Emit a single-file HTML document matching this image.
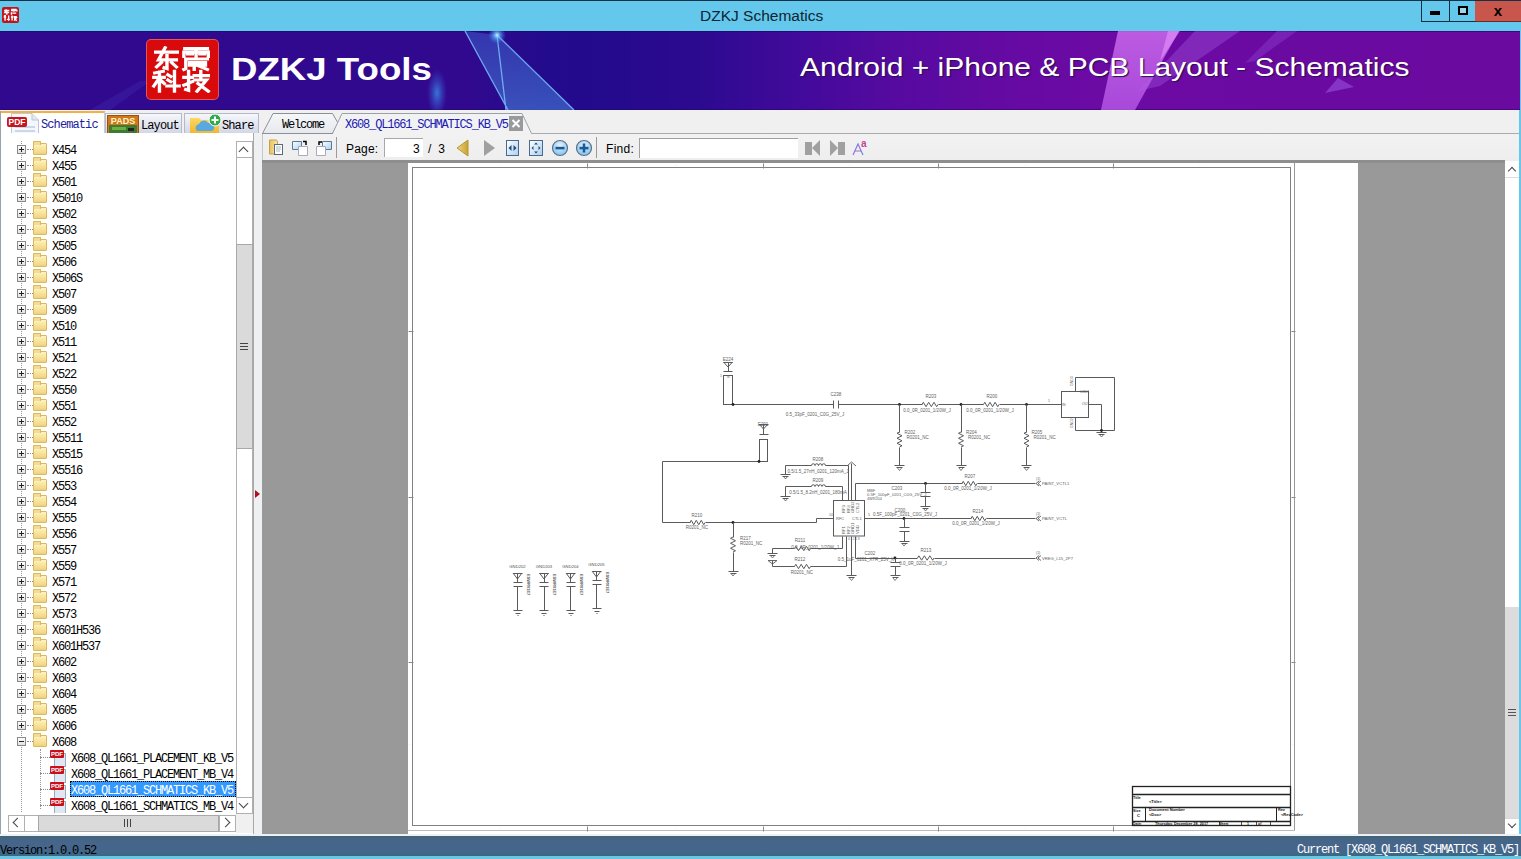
<!DOCTYPE html>
<html><head><meta charset="utf-8"><title>DZKJ Schematics</title>
<style>
*{margin:0;padding:0;box-sizing:border-box}
html,body{width:1521px;height:859px;overflow:hidden;background:#f0f0f0;font-family:"Liberation Sans",sans-serif;position:relative}
.a{position:absolute}
.mono{font-family:"Liberation Mono",monospace}
#title{left:0;top:0;width:1521px;height:31px;background:#64c8ec;border-top:1px solid #12324a}
#ttext{left:700px;top:7px;font-size:15.5px;color:#0e2434;white-space:nowrap}
#banner{left:0;top:31px;width:1520px;height:79px;overflow:hidden;
 background:linear-gradient(90deg,#2c0c8e 0%,#2a0b8e 30%,#2b0a90 45%,#3f0a98 60%,#5a0aa0 72%,#6a0aa2 80%,#6a0aa0 100%)}
#frameR{left:1519px;top:31px;width:2px;height:828px;background:#64c8ec}
#frameB{left:0;top:856px;width:1521px;height:3px;background:#6cc6e2}
.row{position:absolute;left:0;height:16px;width:236px}
.tx{position:absolute;top:4px;font-family:"Liberation Mono",monospace;font-size:12px;line-height:13px;color:#000;letter-spacing:-1.2px;white-space:nowrap}
.tx.sel{background:#3399ff;color:#fff;outline:1px dotted #000;outline-offset:-1px;top:0;padding:4px 0 0 1px;height:16px;width:166px;left:70px!important}
.pl,.mn{position:absolute;left:17px;top:4px;width:9px;height:9px;border:1px solid #8a8a8a;background:linear-gradient(#fff,#e0e0e0)}
.pl:before,.mn:before{content:"";position:absolute;left:1px;top:3px;width:5px;height:1px;background:#222}
.pl:after{content:"";position:absolute;left:3px;top:1px;width:1px;height:5px;background:#222}
.dh{position:absolute;left:27px;top:8px;width:6px;border-top:1px dotted #888}
.fd{position:absolute;left:33px;top:2px;width:14px;height:12px;background:linear-gradient(#fff4c0,#f2d27a);border:1px solid #d8b860;border-radius:1px}
.fd:before{content:"";position:absolute;left:-1px;top:-3px;width:6px;height:3px;background:#f4dc90;border:1px solid #d8b860;border-bottom:none;border-radius:1px 1px 0 0}
.dh2{position:absolute;left:40px;top:8px;width:12px;border-top:1px dotted #888}
.pdf{position:absolute;left:50px;top:1px;width:14px;height:14px}
.pdf:before{content:"";position:absolute;left:4px;top:3px;width:10px;height:12px;background:#dfe8f2;border:1px solid #9ab}
.pdf:after{content:"PDF";position:absolute;left:0;top:0;width:14px;height:8px;background:#c8101a;color:#fff;font-size:6px;line-height:8px;font-weight:bold;text-align:center;border-radius:1px}
</style></head><body>

<div id="title" class="a"></div>
<div class="a" style="left:2px;top:7px;width:17px;height:16px;background:#c0141c;border-radius:2px"></div>
<svg class="a" style="left:3px;top:8px" width="15" height="14" viewBox="0 0 66 54"><g fill="none" stroke="#fff" stroke-width="6"><path d="M5 7 H28 M15 2 L8 16 H27 M17 11 V26 M36 3 H60 M35 7 H61 V12 M48 4 V13 M37 15 V26 M41 19 H58 M4 31 L13 29 M3 36 H14 M9 30 V52 M17 46 H30 M25 29 V52 M35 36 H44 M40 29 V51 M46 34 H61 M47 39 H59 L49 52 M50 43 L61 52"/></g></svg>
<div id="ttext" class="a">DZKJ Schematics</div>
<div class="a" style="left:1421px;top:1px;width:28px;height:21px;border-left:1px solid #0e2d3e;border-bottom:1px solid #0e2d3e"></div>
<div class="a" style="left:1430px;top:11px;width:10px;height:4px;background:#000"></div>
<div class="a" style="left:1449px;top:1px;width:26px;height:21px;border-left:1px solid #0e2d3e;border-bottom:1px solid #0e2d3e"></div>
<div class="a" style="left:1458px;top:6px;width:10px;height:9px;border:2px solid #000;background:#9fd6e8"></div>
<div class="a" style="left:1475px;top:1px;width:46px;height:21px;background:#c8564c;border-bottom:1px solid #6a2a20"></div>
<div class="a" style="left:1490px;top:2px;width:16px;font-size:15px;font-weight:bold;color:#000;text-align:center;line-height:18px">x</div>
<div id="banner" class="a"></div>
<div id="frameR" class="a"></div>

<div class="a" style="left:0;top:31px;width:1520px;height:79px;overflow:hidden">
<svg width="1520" height="79" style="position:absolute;left:0;top:0">
 <defs>
  <linearGradient id="bg" x1="0" y1="0" x2="1520" y2="0" gradientUnits="userSpaceOnUse">
   <stop offset="0" stop-color="#31098e"/><stop offset="0.305" stop-color="#31098e"/>
   <stop offset="0.36" stop-color="#220b8c"/><stop offset="0.395" stop-color="#240a8c"/>
   <stop offset="0.46" stop-color="#2c0a90"/><stop offset="0.526" stop-color="#420a9a"/>
   <stop offset="0.59" stop-color="#560aa0"/><stop offset="0.658" stop-color="#640aa2"/>
   <stop offset="0.724" stop-color="#6c0aa4"/><stop offset="1" stop-color="#6a0a9e"/>
  </linearGradient>
  <linearGradient id="tri" x1="0" y1="0" x2="0" y2="1"><stop offset="0" stop-color="#3a58c8"/><stop offset="1" stop-color="#4a8ae0"/></linearGradient>
  <radialGradient id="glow"><stop offset="0" stop-color="#c0f8ff" stop-opacity="1"/><stop offset="0.4" stop-color="#60c0ff" stop-opacity="0.6"/><stop offset="1" stop-color="#4080ff" stop-opacity="0"/></radialGradient>
  <radialGradient id="glow2"><stop offset="0" stop-color="#3a9af0" stop-opacity="0.75"/><stop offset="1" stop-color="#3a60e0" stop-opacity="0"/></radialGradient>
  <linearGradient id="gp" x1="0" y1="0" x2="0" y2="1"><stop offset="0" stop-color="#d070f0"/><stop offset="1" stop-color="#b858e8"/></linearGradient>
 </defs>
 <rect x="0" y="0" width="1520" height="79" fill="url(#bg)"/>
 <rect x="0" y="0" width="1520" height="1" fill="#1c0860" opacity="0.6"/>
 <rect x="0" y="78" width="1520" height="1" fill="#1c0860" opacity="0.5"/>
 <polygon points="90,79 140,50 150,50 110,79" fill="#4a3ac0" opacity="0.25"/>
 <polygon points="465,0 497,4 574,79 508,79" fill="url(#tri)" opacity="0.55"/>
 <path d="M465,0 L508,79 M497,4 L506,79 M497,4 L574,79" stroke="#78c0ff" stroke-width="1.3" fill="none" opacity="0.85"/>
 <circle cx="497" cy="4" r="9" fill="url(#glow)"/>
 <ellipse cx="437" cy="62" rx="10" ry="24" fill="url(#glow2)"/>
 <polygon points="1101,79 1118,0 1179,0 1135,79" fill="url(#gp)" opacity="0.8"/>
 <polygon points="1168,0 1180,0 1160,30" fill="#f0a0ff" opacity="0.5"/>
 <polygon points="1195,0 1240,0 1160,55 1138,60" fill="#a860e8" opacity="0.35"/>
 <polygon points="1277,0 1297,0 1255,30 1245,32" fill="#9a58e0" opacity="0.3"/>
 <polygon points="1325,62 1354,56 1338,47" fill="#9a58e8" opacity="0.55"/>
</svg>
<div class="a" style="left:147px;top:9px;width:71px;height:59px;background:#d80a0c;border-radius:4px;box-shadow:0 0 0 1px #e05858"></div>
<svg class="a" style="left:151px;top:15px" width="62" height="47" viewBox="0 0 66 54" preserveAspectRatio="none">
 <g fill="none" stroke="#fff" stroke-width="3.6" stroke-linecap="square">
  <!-- c1 -->
  <path d="M5 7 H28 M15 2 L8 16 H27 M17 11 V26 L14 25 M11 19 L6 24 M22 19 L27 24"/>
  <!-- c2 -->
  <path d="M36 3 H60 M35 7 V12 M35 7 H61 V12 M48 4 V13 M39 9 H44 M52 9 H57 M37 15 H60 M37 15 V26 L35 27 M41 19 H58 M41 22 H58 M46 22 V27 M49 22 L60 27"/>
  <!-- c3 -->
  <path d="M4 31 L13 29 M3 36 H14 M9 30 V52 M8 38 L3 46 M10 39 L14 43 M18 33 L21 35 M18 39 L21 41 M17 46 H30 M25 29 V52"/>
  <!-- c4 -->
  <path d="M35 36 H44 M40 29 V51 L37 50 M35 45 L44 41 M46 34 H61 M53 29 V39 M47 39 H59 L49 52 M50 43 L61 52"/>
 </g>
</svg>
<div class="a" style="left:231px;top:20px;font-size:32px;font-weight:bold;color:#fff;white-space:nowrap;transform:scaleX(1.145);transform-origin:0 0">DZKJ Tools</div>
<div class="a" style="left:800px;top:22px;font-size:25px;color:#fff;white-space:nowrap;text-shadow:1px 1px 1px #2a1050;transform:scaleX(1.2);transform-origin:0 0">Android + iPhone &amp; PCB Layout - Schematics</div>
</div>


<!-- left tabs -->
<div class="a" style="left:0;top:110px;width:262px;height:23px;background:#f0f0f0"></div>
<div class="a" style="left:0;top:111px;width:105px;height:23px;background:#fff;border-top:2px solid #f4b040;border-right:1px solid #c8ccd8"></div>
<svg class="a" style="left:6px;top:112px" width="34" height="22">
 <path d="M5.5 1.5 H26 L32.5 8 V21.5 H5.5 Z" fill="#f4f8fc" stroke="#b8c8d8"/>
 <path d="M26 1.5 V8 H32.5" fill="#e0e8f0" stroke="#b8c8d8"/>
 <rect x="9" y="14" width="20" height="2" fill="#c8d8ea"/><rect x="9" y="18" width="20" height="2" fill="#c8d8ea"/>
 <rect x="1" y="5" width="20" height="10" rx="2" fill="#c8141c"/>
 <text x="11" y="13.3" font-size="8.5" font-weight="bold" fill="#fff" text-anchor="middle" font-family="Liberation Sans">PDF</text>
</svg>
<div class="a mono" style="left:41px;top:118px;font-size:12px;letter-spacing:-0.9px;color:#2020a0">Schematic</div>
<div class="a" style="left:105px;top:113px;width:77px;height:20px;background:linear-gradient(#f6f7fb,#d3d7e6);border:1px solid #b4b8c8;border-bottom:none"></div>
<svg class="a" style="left:107px;top:115px" width="32" height="18">
 <rect x="0.5" y="0.5" width="31" height="18" fill="#d07818" stroke="#9a5010"/>
 <text x="16" y="9" font-size="9" font-weight="bold" fill="#fff4c8" text-anchor="middle" font-family="Liberation Sans">PADS</text>
 <rect x="2" y="10" width="28" height="8" fill="#3d7a34"/>
 <rect x="5" y="12" width="14" height="3" fill="#6ab040"/><rect x="21" y="13" width="6" height="3" fill="#222"/>
</svg>
<div class="a mono" style="left:141px;top:119px;font-size:12px;letter-spacing:-0.9px;color:#000">Layout</div>
<div class="a" style="left:184px;top:113px;width:75px;height:20px;background:linear-gradient(#f6f7fb,#d3d7e6);border:1px solid #b4b8c8;border-bottom:none"></div>
<svg class="a" style="left:189px;top:113px" width="34" height="20">
 <defs><linearGradient id="fold" x1="0" y1="0" x2="0" y2="1"><stop offset="0" stop-color="#fbd860"/><stop offset="1" stop-color="#f0b830"/></linearGradient></defs>
 <path d="M1 5 H10 L12 7 H30 V20 H1 Z" fill="url(#fold)"/>
 <path d="M8 18 a4 4 0 0 1 2-7 a5 5 0 0 1 9-1 a4 4 0 0 1 4 8 Z" fill="#5aa8e0"/>
 <circle cx="26" cy="7" r="6" fill="#2eaa48" stroke="#fff" stroke-width="1"/>
 <path d="M26 3.5 V10.5 M22.5 7 H29.5" stroke="#fff" stroke-width="2"/>
</svg>
<div class="a mono" style="left:222px;top:119px;font-size:12px;letter-spacing:-0.9px;color:#000">Share</div>
<!-- panel body -->
<div class="a" style="left:0;top:133px;width:262px;height:703px;background:#fff;border-left:1px solid #c8ccd4"></div>
<div class="a" style="left:253px;top:133px;width:9px;height:703px;background:#eef0f2;border-left:1px solid #a8a8a8"></div>
<div class="a" style="left:0;top:0;width:236px;height:813px;overflow:hidden;clip-path:inset(141px 0 0 0)">
<div class="a" style="left:21px;top:141px;height:675px;border-left:1px dotted #999"></div>
<div class="a" style="left:40px;top:749px;height:60px;border-left:1px dotted #999"></div>
<div class="row" style="top:141px"><i class="pl"></i><span class="dh"></span><span class="fd"></span><span class="tx" style="left:52px">X454</span></div>
<div class="row" style="top:157px"><i class="pl"></i><span class="dh"></span><span class="fd"></span><span class="tx" style="left:52px">X455</span></div>
<div class="row" style="top:173px"><i class="pl"></i><span class="dh"></span><span class="fd"></span><span class="tx" style="left:52px">X501</span></div>
<div class="row" style="top:189px"><i class="pl"></i><span class="dh"></span><span class="fd"></span><span class="tx" style="left:52px">X5010</span></div>
<div class="row" style="top:205px"><i class="pl"></i><span class="dh"></span><span class="fd"></span><span class="tx" style="left:52px">X502</span></div>
<div class="row" style="top:221px"><i class="pl"></i><span class="dh"></span><span class="fd"></span><span class="tx" style="left:52px">X503</span></div>
<div class="row" style="top:237px"><i class="pl"></i><span class="dh"></span><span class="fd"></span><span class="tx" style="left:52px">X505</span></div>
<div class="row" style="top:253px"><i class="pl"></i><span class="dh"></span><span class="fd"></span><span class="tx" style="left:52px">X506</span></div>
<div class="row" style="top:269px"><i class="pl"></i><span class="dh"></span><span class="fd"></span><span class="tx" style="left:52px">X506S</span></div>
<div class="row" style="top:285px"><i class="pl"></i><span class="dh"></span><span class="fd"></span><span class="tx" style="left:52px">X507</span></div>
<div class="row" style="top:301px"><i class="pl"></i><span class="dh"></span><span class="fd"></span><span class="tx" style="left:52px">X509</span></div>
<div class="row" style="top:317px"><i class="pl"></i><span class="dh"></span><span class="fd"></span><span class="tx" style="left:52px">X510</span></div>
<div class="row" style="top:333px"><i class="pl"></i><span class="dh"></span><span class="fd"></span><span class="tx" style="left:52px">X511</span></div>
<div class="row" style="top:349px"><i class="pl"></i><span class="dh"></span><span class="fd"></span><span class="tx" style="left:52px">X521</span></div>
<div class="row" style="top:365px"><i class="pl"></i><span class="dh"></span><span class="fd"></span><span class="tx" style="left:52px">X522</span></div>
<div class="row" style="top:381px"><i class="pl"></i><span class="dh"></span><span class="fd"></span><span class="tx" style="left:52px">X550</span></div>
<div class="row" style="top:397px"><i class="pl"></i><span class="dh"></span><span class="fd"></span><span class="tx" style="left:52px">X551</span></div>
<div class="row" style="top:413px"><i class="pl"></i><span class="dh"></span><span class="fd"></span><span class="tx" style="left:52px">X552</span></div>
<div class="row" style="top:429px"><i class="pl"></i><span class="dh"></span><span class="fd"></span><span class="tx" style="left:52px">X5511</span></div>
<div class="row" style="top:445px"><i class="pl"></i><span class="dh"></span><span class="fd"></span><span class="tx" style="left:52px">X5515</span></div>
<div class="row" style="top:461px"><i class="pl"></i><span class="dh"></span><span class="fd"></span><span class="tx" style="left:52px">X5516</span></div>
<div class="row" style="top:477px"><i class="pl"></i><span class="dh"></span><span class="fd"></span><span class="tx" style="left:52px">X553</span></div>
<div class="row" style="top:493px"><i class="pl"></i><span class="dh"></span><span class="fd"></span><span class="tx" style="left:52px">X554</span></div>
<div class="row" style="top:509px"><i class="pl"></i><span class="dh"></span><span class="fd"></span><span class="tx" style="left:52px">X555</span></div>
<div class="row" style="top:525px"><i class="pl"></i><span class="dh"></span><span class="fd"></span><span class="tx" style="left:52px">X556</span></div>
<div class="row" style="top:541px"><i class="pl"></i><span class="dh"></span><span class="fd"></span><span class="tx" style="left:52px">X557</span></div>
<div class="row" style="top:557px"><i class="pl"></i><span class="dh"></span><span class="fd"></span><span class="tx" style="left:52px">X559</span></div>
<div class="row" style="top:573px"><i class="pl"></i><span class="dh"></span><span class="fd"></span><span class="tx" style="left:52px">X571</span></div>
<div class="row" style="top:589px"><i class="pl"></i><span class="dh"></span><span class="fd"></span><span class="tx" style="left:52px">X572</span></div>
<div class="row" style="top:605px"><i class="pl"></i><span class="dh"></span><span class="fd"></span><span class="tx" style="left:52px">X573</span></div>
<div class="row" style="top:621px"><i class="pl"></i><span class="dh"></span><span class="fd"></span><span class="tx" style="left:52px">X601H536</span></div>
<div class="row" style="top:637px"><i class="pl"></i><span class="dh"></span><span class="fd"></span><span class="tx" style="left:52px">X601H537</span></div>
<div class="row" style="top:653px"><i class="pl"></i><span class="dh"></span><span class="fd"></span><span class="tx" style="left:52px">X602</span></div>
<div class="row" style="top:669px"><i class="pl"></i><span class="dh"></span><span class="fd"></span><span class="tx" style="left:52px">X603</span></div>
<div class="row" style="top:685px"><i class="pl"></i><span class="dh"></span><span class="fd"></span><span class="tx" style="left:52px">X604</span></div>
<div class="row" style="top:701px"><i class="pl"></i><span class="dh"></span><span class="fd"></span><span class="tx" style="left:52px">X605</span></div>
<div class="row" style="top:717px"><i class="pl"></i><span class="dh"></span><span class="fd"></span><span class="tx" style="left:52px">X606</span></div>
<div class="row" style="top:733px"><i class="mn"></i><span class="dh"></span><span class="fd"></span><span class="tx" style="left:52px">X608</span></div>
<div class="row" style="top:749px"><span class="dh2"></span><span class="pdf"></span><span class="tx" style="left:71px">X608_QL1661_PLACEMENT_KB_V5</span></div>
<div class="row" style="top:765px"><span class="dh2"></span><span class="pdf"></span><span class="tx" style="left:71px">X608_QL1661_PLACEMENT_MB_V4</span></div>
<div class="row" style="top:781px"><span class="dh2"></span><span class="pdf"></span><span class="tx sel" style="left:71px">X608_QL1661_SCHMATICS_KB_V5</span></div>
<div class="row" style="top:797px"><span class="dh2"></span><span class="pdf"></span><span class="tx" style="left:71px">X608_QL1661_SCHMATICS_MB_V4</span></div>
</div>
<!-- vscroll -->
<div class="a" style="left:236px;top:141px;width:17px;height:673px;background:#fff;border-left:1px solid #b0b0b0;border-right:1px solid #b0b0b0"></div>
<div class="a" style="left:236px;top:141px;width:17px;height:17px;background:#fff;border:1px solid #b0b0b0"></div>
<div class="a" style="left:240px;top:148px;width:7px;height:7px;border-left:1px solid #444;border-top:1px solid #444;transform:rotate(45deg)"></div>
<div class="a" style="left:236px;top:244px;width:17px;height:205px;background:#dadada;border:1px solid #a8a8a8"></div>
<div class="a" style="left:240px;top:343px;width:8px;height:7px;border-top:1px solid #444;border-bottom:1px solid #444"></div>
<div class="a" style="left:240px;top:346px;width:8px;height:1px;background:#444"></div>
<div class="a" style="left:236px;top:797px;width:17px;height:17px;background:#fff;border:1px solid #b0b0b0"></div>
<div class="a" style="left:240px;top:800px;width:7px;height:7px;border-right:1px solid #444;border-bottom:1px solid #444;transform:rotate(45deg)"></div>
<!-- hscroll -->
<div class="a" style="left:8px;top:815px;width:228px;height:17px;background:#fff;border:1px solid #b0b0b0"></div>
<div class="a" style="left:8px;top:815px;width:17px;height:17px;border:1px solid #b0b0b0"></div>
<div class="a" style="left:14px;top:819px;width:7px;height:7px;border-left:1px solid #444;border-bottom:1px solid #444;transform:rotate(45deg)"></div>
<div class="a" style="left:38px;top:815px;width:181px;height:17px;background:#dadada;border:1px solid #a8a8a8"></div>
<div class="a" style="left:124px;top:819px;width:7px;height:8px;border-left:1px solid #444;border-right:1px solid #444"></div>
<div class="a" style="left:127px;top:819px;width:1px;height:8px;background:#444"></div>
<div class="a" style="left:219px;top:815px;width:17px;height:17px;border:1px solid #b0b0b0"></div>
<div class="a" style="left:222px;top:819px;width:7px;height:7px;border-right:1px solid #444;border-top:1px solid #444;transform:rotate(45deg)"></div>
<div class="a" style="left:236px;top:814px;width:17px;height:19px;background:#f0f0f0"></div>

<div class="a" style="left:0;top:111px;width:1px;height:725px;background:#98a2aa"></div>
<svg class="a" style="left:253px;top:489px" width="8" height="10"><path d="M2 1 L7 5 L2 9 Z" fill="#b01020"/></svg>

<!-- doc tabs -->
<svg class="a" style="left:262px;top:110px" width="280" height="24">
 <defs><linearGradient id="wt" x1="0" y1="0" x2="0" y2="1"><stop offset="0" stop-color="#f6f7f9"/><stop offset="1" stop-color="#e6e8ec"/></linearGradient></defs>
 <polygon points="0.5,23.5 11,3.5 70.5,3.5 76,13 70.5,23.5" fill="url(#wt)" stroke="#8a9098" stroke-width="1"/>
 <polygon points="70.5,23.5 80,3.5 260,3.5 269.5,23.5" fill="#f2f2f2" stroke="#9aa0a8" stroke-width="1"/>
 <rect x="71" y="23" width="198" height="2" fill="#f2f2f2"/>
</svg>
<div class="a mono" style="left:282px;top:118px;font-size:12px;letter-spacing:-1.2px;color:#000">Welcome</div>
<div class="a mono" style="left:345px;top:118px;font-size:12px;letter-spacing:-1.17px;color:#1a1ab4">X608_QL1661_SCHMATICS_KB_V5</div>
<div class="a" style="left:509px;top:116px;width:14px;height:15px;background:#9a9a9a"></div>
<svg class="a" style="left:509px;top:116px" width="14" height="15"><path d="M3.5 4 L10.5 11 M10.5 4 L3.5 11" stroke="#fff" stroke-width="2"/></svg>
<!-- toolbar -->
<div class="a" style="left:262px;top:133px;width:1257px;height:28px;background:linear-gradient(#f2f2f2,#eeeeee);border-left:1px solid #c8c8c8"></div>
<div class="a" style="left:262px;top:160px;width:1243px;height:3px;background:#8e8e8e"></div>
<div class="a" style="left:262px;top:133px;width:71px;height:1px;background:#8a9098"></div>
<div class="a" style="left:531px;top:133px;width:988px;height:1px;background:#a8acb0"></div>
<svg class="a" style="left:262px;top:134px" width="620" height="26">
 <defs>
  <linearGradient id="fo" x1="0" y1="0" x2="1" y2="0"><stop offset="0" stop-color="#e8c060"/><stop offset="1" stop-color="#f8e8b0"/></linearGradient>
  <linearGradient id="bd" x1="0" y1="0" x2="1" y2="1"><stop offset="0" stop-color="#ffffff"/><stop offset="1" stop-color="#a8d0f0"/></linearGradient>
  <linearGradient id="gold" x1="0" y1="0" x2="1" y2="0"><stop offset="0" stop-color="#f0d878"/><stop offset="1" stop-color="#c8a038"/></linearGradient>
  <radialGradient id="zb" cx="0.5" cy="0.35" r="0.6"><stop offset="0" stop-color="#e8f6ff"/><stop offset="1" stop-color="#88c4ec"/></radialGradient>
 </defs>
 <!-- open -->
 <path d="M7.5 6 H14.5 L15.5 8 V20 H7.5 Z" fill="url(#fo)" stroke="#c8a048"/>
 <rect x="12.5" y="10.5" width="8" height="10" fill="#fff" stroke="#5a6a7a"/>
 <path d="M14 13 H19 M14 15 H19 M14 17 H18" stroke="#8aa" stroke-width="0.8"/>
 <!-- rot1 -->
 <path d="M30.5 7.5 H39.5 V15.5 H30.5 Z" fill="url(#bd)" stroke="#5a7898"/>
 <path d="M36.5 12.5 H45.5 V21.5 H36.5 Z" fill="#fff" stroke="#aab"/>
 <path d="M41 7.5 H44 V11" fill="none" stroke="#000" stroke-width="1.5"/>
 <!-- rot2 -->
 <path d="M60.5 7.5 H69.5 V15.5 H60.5 Z" fill="url(#bd)" stroke="#5a7898"/>
 <path d="M54.5 12.5 H63.5 V21.5 H54.5 Z" fill="#fff" stroke="#aab"/>
 <path d="M57 11 V8 H60" fill="none" stroke="#000" stroke-width="1.5"/>
 <rect x="74" y="3" width="1" height="21" fill="#9a9a9a"/>
 <!-- prev/next -->
 <path d="M195 14 L206 6 V22 Z" fill="url(#gold)" stroke="#b89830"/>
 <path d="M222 6 L233 14 L222 22 Z" fill="#a0a0a0"/>
 <!-- fit width -->
 <rect x="244.5" y="6.5" width="12" height="15" fill="url(#bd)" stroke="#4a6890"/>
 <path d="M246.5 14 L249.5 11 V17 Z M254.5 14 L251.5 11 V17 Z" fill="#2a4a78"/>
 <rect x="267.5" y="6.5" width="13" height="15" fill="url(#bd)" stroke="#4a6890"/>
 <path d="M274 8.5 L276 10.5 H272 Z M274 19.5 L276 17.5 H272 Z M269.5 14 L271.5 12 V16 Z M278.5 14 L276.5 12 V16 Z" fill="#2a4a78"/>
 <!-- zoom -->
 <circle cx="298" cy="14" r="7.5" fill="url(#zb)" stroke="#5a7088" stroke-width="1.2"/>
 <rect x="293.5" y="12.8" width="9" height="2.6" fill="#1a5a98"/>
 <circle cx="322" cy="14" r="7.5" fill="url(#zb)" stroke="#5a7088" stroke-width="1.2"/>
 <rect x="317.5" y="12.8" width="9" height="2.6" fill="#1a5a98"/>
 <rect x="320.7" y="9.5" width="2.6" height="9" fill="#1a5a98"/>
 <rect x="334" y="3" width="1" height="21" fill="#9a9a9a"/>
 <!-- find nav -->
 <path d="M543 8 H550 V14 L558 6 V22 L550 14 V21 H543 Z" fill="#a0a0a0"/>
 <path d="M568 6 L576 14 V8 H583 V21 H576 V14 L568 22 Z" fill="#a0a0a0"/>
 <path d="M591 21 L596 10 L601 21 M593 17 H599" fill="none" stroke="#8878e0" stroke-width="1.2"/>
 <text x="599" y="13" font-size="10" font-weight="bold" fill="#c04898" font-family="Liberation Sans">a</text>
</svg>
<div class="a" style="left:346px;top:142px;font-size:12px;color:#000;white-space:nowrap;letter-spacing:0.2px">Page:</div>
<div class="a" style="left:384px;top:138px;width:39px;height:19px;background:#fff;border-left:1px solid #a8a8a8;border-top:1px solid #a8a8a8"></div>
<div class="a" style="left:413px;top:142px;font-size:12px;color:#000">3</div>
<div class="a" style="left:428px;top:142px;font-size:12px;color:#000;white-space:nowrap;letter-spacing:1.8px">/ 3</div>
<div class="a" style="left:606px;top:142px;font-size:12px;color:#000;white-space:nowrap;letter-spacing:0.3px">Find:</div>
<div class="a" style="left:639px;top:138px;width:159px;height:20px;background:#fff;border-left:1px solid #a0a0a0;border-top:1px solid #a0a0a0"></div>
<!-- viewer area -->
<div class="a" style="left:262px;top:163px;width:1243px;height:671px;background:#999999"></div>
<div class="a" style="left:408px;top:163px;width:950px;height:671px;background:#fff"></div>
<div class="a" style="left:412px;top:167px;width:879px;height:659px;border:1px solid #808080"></div>
<div class="a" style="left:1294px;top:163px;width:1px;height:668px;background:#999"></div>
<div class="a" style="left:408px;top:830px;width:887px;height:1px;background:#bbb"></div>
<!-- right vscroll -->
<div class="a" style="left:1505px;top:161px;width:14px;height:674px;background:#fff"></div>
<div class="a" style="left:1505px;top:161px;width:14px;height:17px;background:#fff;border-bottom:1px solid #ddd"></div>
<div class="a" style="left:1509px;top:168px;width:6px;height:6px;border-left:1px solid #444;border-top:1px solid #444;transform:rotate(45deg)"></div>
<div class="a" style="left:1505px;top:607px;width:14px;height:211px;background:#dcdcdc"></div>
<div class="a" style="left:1508px;top:709px;width:8px;height:7px;border-top:1px solid #555;border-bottom:1px solid #555"></div>
<div class="a" style="left:1508px;top:712px;width:8px;height:1px;background:#555"></div>
<div class="a" style="left:1505px;top:818px;width:14px;height:1px;background:#d8d8d8"></div>
<div class="a" style="left:1509px;top:821px;width:6px;height:6px;border-right:1px solid #444;border-bottom:1px solid #444;transform:rotate(45deg)"></div>

<svg class="a" style="left:0;top:0" width="1521" height="859" font-family="Liberation Sans, sans-serif">
<text x="728" y="361" font-size="4.5" fill="#626262" text-anchor="middle">E224</text>
<path d="M723.5,362 L728,367 L732.5,362" fill="none" stroke="#5a5a5a" stroke-width="1"/>
<path d="M723.5,362.5 L732.5,362.5" fill="none" stroke="#5a5a5a" stroke-width="1"/>
<path d="M728.5,362.5 L728.5,371.5" fill="none" stroke="#5a5a5a" stroke-width="1"/>
<path d="M723.5,371.5 L732.5,371.5" fill="none" stroke="#5a5a5a" stroke-width="1"/>
<rect x="723.5" y="375.5" width="9" height="29" fill="none" stroke="#5a5a5a"/>
<text x="720" y="377" font-size="3.5" fill="#626262" text-anchor="start">1</text>
<text x="727" y="378" font-size="3.5" fill="#626262" text-anchor="start">N</text>
<path d="M732.5,404.5 L833.5,404.5" fill="none" stroke="#5a5a5a" stroke-width="1"/>
<path d="M838.5,404.5 L922.5,404.5" fill="none" stroke="#5a5a5a" stroke-width="1"/>
<circle cx="733" cy="404.5" r="1.4" fill="#222"/>
<path d="M833.5,400.5 L833.5,408.5" fill="none" stroke="#5a5a5a" stroke-width="1"/>
<path d="M838.5,400.5 L838.5,408.5" fill="none" stroke="#5a5a5a" stroke-width="1"/>
<text x="836" y="396" font-size="4.5" fill="#626262" text-anchor="middle">C238</text>
<text x="815" y="416" font-size="4.5" fill="#626262" text-anchor="middle">0.5_33pF_0201_C0G_25V_J</text>
<path d="M922,404.5 L923.33,402.3 L926.0,406.7 L928.67,402.3 L931.33,406.7 L934.0,402.3 L936.67,406.7 L938,404.5" fill="none" stroke="#5a5a5a" stroke-width="1"/>
<path d="M938.5,404.5 L983.5,404.5" fill="none" stroke="#5a5a5a" stroke-width="1"/>
<text x="931" y="398" font-size="4.5" fill="#626262" text-anchor="middle">R203</text>
<text x="927" y="412" font-size="4.5" fill="#626262" text-anchor="middle">0.0_0R_0201_1/20W_J</text>
<path d="M983.5,404.5 L984.79,402.3 L987.38,406.7 L989.96,402.3 L992.54,406.7 L995.12,402.3 L997.71,406.7 L999,404.5" fill="none" stroke="#5a5a5a" stroke-width="1"/>
<path d="M999.5,404.5 L1061.5,404.5" fill="none" stroke="#5a5a5a" stroke-width="1"/>
<text x="992" y="398" font-size="4.5" fill="#626262" text-anchor="middle">R200</text>
<text x="990" y="412" font-size="4.5" fill="#626262" text-anchor="middle">0.0_0R_0201_1/20W_J</text>
<circle cx="899.5" cy="404.5" r="1.4" fill="#222"/>
<path d="M899.5,404.5 L899.5,432.5" fill="none" stroke="#5a5a5a" stroke-width="1"/>
<path d="M899.5,432 L897.0,433.25 L902.0,435.75 L897.0,438.25 L902.0,440.75 L897.0,443.25 L902.0,445.75 L899.5,447" fill="none" stroke="#5a5a5a" stroke-width="1"/>
<path d="M899.5,447.5 L899.5,465.5" fill="none" stroke="#5a5a5a" stroke-width="1"/>
<path d="M894.5,465.5 L904.5,465.5" fill="none" stroke="#5a5a5a" stroke-width="1"/>
<path d="M896.5,467.5 L902.5,467.5" fill="none" stroke="#5a5a5a" stroke-width="1"/>
<path d="M897.5,468.0 L899.5,470.5 L901.5,468.0" fill="none" stroke="#5a5a5a" stroke-width="0.8"/>
<text x="904.5" y="434" font-size="4.5" fill="#626262" text-anchor="start">R202</text>
<text x="906.5" y="439" font-size="4.5" fill="#626262" text-anchor="start">R0201_NC</text>
<circle cx="961" cy="404.5" r="1.4" fill="#222"/>
<path d="M961.5,404.5 L961.5,432.5" fill="none" stroke="#5a5a5a" stroke-width="1"/>
<path d="M961,432 L958.5,433.25 L963.5,435.75 L958.5,438.25 L963.5,440.75 L958.5,443.25 L963.5,445.75 L961,447" fill="none" stroke="#5a5a5a" stroke-width="1"/>
<path d="M961.5,447.5 L961.5,465.5" fill="none" stroke="#5a5a5a" stroke-width="1"/>
<path d="M956.5,465.5 L966.5,465.5" fill="none" stroke="#5a5a5a" stroke-width="1"/>
<path d="M958.5,467.5 L964.5,467.5" fill="none" stroke="#5a5a5a" stroke-width="1"/>
<path d="M959,468.0 L961,470.5 L963,468.0" fill="none" stroke="#5a5a5a" stroke-width="0.8"/>
<text x="966" y="434" font-size="4.5" fill="#626262" text-anchor="start">R204</text>
<text x="968" y="439" font-size="4.5" fill="#626262" text-anchor="start">R0201_NC</text>
<circle cx="1026.5" cy="404.5" r="1.4" fill="#222"/>
<path d="M1026.5,404.5 L1026.5,432.5" fill="none" stroke="#5a5a5a" stroke-width="1"/>
<path d="M1026.5,432 L1024.0,433.25 L1029.0,435.75 L1024.0,438.25 L1029.0,440.75 L1024.0,443.25 L1029.0,445.75 L1026.5,447" fill="none" stroke="#5a5a5a" stroke-width="1"/>
<path d="M1026.5,447.5 L1026.5,465.5" fill="none" stroke="#5a5a5a" stroke-width="1"/>
<path d="M1021.5,465.5 L1031.5,465.5" fill="none" stroke="#5a5a5a" stroke-width="1"/>
<path d="M1023.5,467.5 L1029.5,467.5" fill="none" stroke="#5a5a5a" stroke-width="1"/>
<path d="M1024.5,468.0 L1026.5,470.5 L1028.5,468.0" fill="none" stroke="#5a5a5a" stroke-width="0.8"/>
<text x="1031.5" y="434" font-size="4.5" fill="#626262" text-anchor="start">R205</text>
<text x="1033.5" y="439" font-size="4.5" fill="#626262" text-anchor="start">R0201_NC</text>
<rect x="1061.5" y="391.5" width="27" height="26" fill="none" stroke="#5a5a5a"/>
<text x="1080" y="393" font-size="4" fill="#626262" text-anchor="start">U201</text>
<path d="M1075.5,377.5 L1114.5,377.5 L1114.5,430.5 L1075.5,430.5" fill="none" stroke="#5a5a5a" stroke-width="1"/>
<path d="M1075.5,377.5 L1075.5,391.5" fill="none" stroke="#5a5a5a" stroke-width="1"/>
<path d="M1075.5,417.5 L1075.5,430.5" fill="none" stroke="#5a5a5a" stroke-width="1"/>
<text x="1073" y="386" font-size="3.5" fill="#626262" text-anchor="start" transform="rotate(-90 1073 386)">GND3</text>
<text x="1073" y="428" font-size="3.5" fill="#626262" text-anchor="start" transform="rotate(-90 1073 428)">GND2</text>
<text x="1082" y="405" font-size="3.5" fill="#626262" text-anchor="start">OUT</text>
<path d="M1088.5,404.5 L1101.5,404.5 L1101.5,432.5" fill="none" stroke="#5a5a5a" stroke-width="1"/>
<circle cx="1101.5" cy="430.5" r="1.4" fill="#222"/>
<path d="M1096.5,432.5 L1106.5,432.5" fill="none" stroke="#5a5a5a" stroke-width="1"/>
<path d="M1098.5,434.5 L1104.5,434.5" fill="none" stroke="#5a5a5a" stroke-width="1"/>
<path d="M1099.5,434.5 L1101.5,437 L1103.5,434.5" fill="none" stroke="#5a5a5a" stroke-width="0.8"/>
<text x="1048" y="402" font-size="3.5" fill="#626262" text-anchor="start">1</text>
<text x="1062" y="406" font-size="3.5" fill="#626262" text-anchor="start">IN</text>
<text x="763" y="426" font-size="4.5" fill="#626262" text-anchor="middle">E201</text>
<path d="M759.0,424 L763.5,429 L768.0,424" fill="none" stroke="#5a5a5a" stroke-width="1"/>
<path d="M759.5,424.5 L768.5,424.5" fill="none" stroke="#5a5a5a" stroke-width="1"/>
<path d="M763.5,424.5 L763.5,434.5" fill="none" stroke="#5a5a5a" stroke-width="1"/>
<path d="M759.5,434.5 L768.5,434.5" fill="none" stroke="#5a5a5a" stroke-width="1"/>
<rect x="759.5" y="439.5" width="8" height="22" fill="none" stroke="#5a5a5a"/>
<path d="M758.5,461.5 L662.5,461.5 L662.5,522.5 L690.5,522.5" fill="none" stroke="#5a5a5a" stroke-width="1"/>
<circle cx="759" cy="461.5" r="1.4" fill="#222"/>
<path d="M690,522.5 L691.25,520.3 L693.75,524.7 L696.25,520.3 L698.75,524.7 L701.25,520.3 L703.75,524.7 L705,522.5" fill="none" stroke="#5a5a5a" stroke-width="1"/>
<path d="M705.5,522.5 L816.5,522.5 L816.5,518.5 L833.5,518.5" fill="none" stroke="#5a5a5a" stroke-width="1"/>
<text x="697" y="517" font-size="4.5" fill="#626262" text-anchor="middle">R210</text>
<text x="697" y="529" font-size="4.5" fill="#626262" text-anchor="middle">R0201_NC</text>
<circle cx="733" cy="522.5" r="1.4" fill="#222"/>
<path d="M733.5,522.5 L733.5,537.5" fill="none" stroke="#5a5a5a" stroke-width="1"/>
<path d="M733,537 L730.5,538.25 L735.5,540.75 L730.5,543.25 L735.5,545.75 L730.5,548.25 L735.5,550.75 L733,552" fill="none" stroke="#5a5a5a" stroke-width="1"/>
<path d="M733.5,552.5 L733.5,571.5" fill="none" stroke="#5a5a5a" stroke-width="1"/>
<path d="M728.5,571.5 L738.5,571.5" fill="none" stroke="#5a5a5a" stroke-width="1"/>
<path d="M730.5,573.5 L736.5,573.5" fill="none" stroke="#5a5a5a" stroke-width="1"/>
<path d="M731,573.5 L733,576 L735,573.5" fill="none" stroke="#5a5a5a" stroke-width="0.8"/>
<text x="740" y="540" font-size="4.5" fill="#626262" text-anchor="start">R217</text>
<text x="740" y="545" font-size="4.5" fill="#626262" text-anchor="start">R0201_NC</text>
<rect x="833.5" y="500.5" width="31" height="35.5" fill="none" stroke="#5a5a5a"/>
<text x="836" y="520" font-size="4" fill="#626262" text-anchor="start">RFC</text>
<text x="852" y="520" font-size="4" fill="#626262" text-anchor="start">CTL1</text>
<text x="845.0" y="513" font-size="4.2" fill="#5a5a5a" text-anchor="start" transform="rotate(-90 845.0 513)">RF3</text>
<text x="849.5" y="513" font-size="4.2" fill="#5a5a5a" text-anchor="start" transform="rotate(-90 849.5 513)">RF4</text>
<text x="854.0" y="513" font-size="4.2" fill="#5a5a5a" text-anchor="start" transform="rotate(-90 854.0 513)">GND2</text>
<text x="858.5" y="513" font-size="4.2" fill="#5a5a5a" text-anchor="start" transform="rotate(-90 858.5 513)">CTL2</text>
<text x="845.0" y="534" font-size="4.2" fill="#5a5a5a" text-anchor="start" transform="rotate(-90 845.0 534)">RF1</text>
<text x="849.5" y="534" font-size="4.2" fill="#5a5a5a" text-anchor="start" transform="rotate(-90 849.5 534)">RF2</text>
<text x="854.0" y="534" font-size="4.2" fill="#5a5a5a" text-anchor="start" transform="rotate(-90 854.0 534)">GND1</text>
<text x="858.5" y="534" font-size="4.2" fill="#5a5a5a" text-anchor="start" transform="rotate(-90 858.5 534)">VDD</text>
<text x="829" y="516" font-size="3.5" fill="#626262" text-anchor="start">10</text>
<path d="M785.5,465.5 L811.5,465.5" fill="none" stroke="#5a5a5a" stroke-width="1"/>
<path d="M811.5,465.5 a1.75,1.75 0 0 1 3.5,0 a1.75,1.75 0 0 1 3.5,0 a1.75,1.75 0 0 1 3.5,0 a1.75,1.75 0 0 1 3.5,0" fill="none" stroke="#5a5a5a" stroke-width="1"/>
<path d="M825.5,465.5 L848.5,465.5 L848.5,500.5" fill="none" stroke="#5a5a5a" stroke-width="1"/>
<path d="M785.5,465.5 L785.5,474.5" fill="none" stroke="#5a5a5a" stroke-width="1"/>
<path d="M780.5,474.5 L790.5,474.5" fill="none" stroke="#5a5a5a" stroke-width="1"/>
<path d="M782.5,476.5 L788.5,476.5" fill="none" stroke="#5a5a5a" stroke-width="1"/>
<path d="M783.5,476.5 L785.5,479 L787.5,476.5" fill="none" stroke="#5a5a5a" stroke-width="0.8"/>
<text x="818" y="461" font-size="4.5" fill="#626262" text-anchor="middle">R208</text>
<text x="818" y="473" font-size="4.5" fill="#626262" text-anchor="middle">0.5/1.5_27nH_0201_120mA_J</text>
<path d="M851.5,463.5 L851.5,500.5" fill="none" stroke="#5a5a5a" stroke-width="1"/>
<path d="M851.5,536.5 L851.5,575.5" fill="none" stroke="#5a5a5a" stroke-width="1"/>
<path d="M846.5,575.5 L856.5,575.5" fill="none" stroke="#5a5a5a" stroke-width="1"/>
<path d="M848.5,577.5 L854.5,577.5" fill="none" stroke="#5a5a5a" stroke-width="1"/>
<path d="M849.5,578.0 L851.5,580.5 L853.5,578.0" fill="none" stroke="#5a5a5a" stroke-width="0.8"/>
<path d="M847,466 L851.5,462 L856,466" fill="none" stroke="#5a5a5a" stroke-width="0.9"/>
<path d="M785.5,486.5 L811.5,486.5" fill="none" stroke="#5a5a5a" stroke-width="1"/>
<path d="M811.5,486.5 a1.75,1.75 0 0 1 3.5,0 a1.75,1.75 0 0 1 3.5,0 a1.75,1.75 0 0 1 3.5,0 a1.75,1.75 0 0 1 3.5,0" fill="none" stroke="#5a5a5a" stroke-width="1"/>
<path d="M825.5,486.5 L842.5,486.5 L842.5,500.5" fill="none" stroke="#5a5a5a" stroke-width="1"/>
<path d="M785.5,486.5 L785.5,496.5" fill="none" stroke="#5a5a5a" stroke-width="1"/>
<path d="M780.5,496.5 L790.5,496.5" fill="none" stroke="#5a5a5a" stroke-width="1"/>
<path d="M782.5,498.5 L788.5,498.5" fill="none" stroke="#5a5a5a" stroke-width="1"/>
<path d="M783.5,498.5 L785.5,501 L787.5,498.5" fill="none" stroke="#5a5a5a" stroke-width="0.8"/>
<text x="818" y="482" font-size="4.5" fill="#626262" text-anchor="middle">R209</text>
<text x="818" y="494" font-size="4.5" fill="#626262" text-anchor="middle">0.5/1.5_8.2nH_0201_180mA</text>
<path d="M855.5,500.5 L855.5,483.5 L962.5,483.5" fill="none" stroke="#5a5a5a" stroke-width="1"/>
<path d="M962,483.5 L963.25,481.3 L965.75,485.7 L968.25,481.3 L970.75,485.7 L973.25,481.3 L975.75,485.7 L977,483.5" fill="none" stroke="#5a5a5a" stroke-width="1"/>
<path d="M977.5,483.5 L1035.5,483.5" fill="none" stroke="#5a5a5a" stroke-width="1"/>
<circle cx="925.5" cy="483.5" r="1.4" fill="#222"/>
<path d="M925.5,483.5 L925.5,492.5" fill="none" stroke="#5a5a5a" stroke-width="1"/>
<path d="M920.5,492.5 L930.5,492.5" fill="none" stroke="#5a5a5a" stroke-width="1"/>
<path d="M920.5,496.5 L930.5,496.5" fill="none" stroke="#5a5a5a" stroke-width="1"/>
<path d="M925.5,496.5 L925.5,506.5" fill="none" stroke="#5a5a5a" stroke-width="1"/>
<path d="M920.5,506.5 L930.5,506.5" fill="none" stroke="#5a5a5a" stroke-width="1"/>
<path d="M922.5,508.5 L928.5,508.5" fill="none" stroke="#5a5a5a" stroke-width="1"/>
<path d="M923.5,508.5 L925.5,511 L927.5,508.5" fill="none" stroke="#5a5a5a" stroke-width="0.8"/>
<text x="970" y="478" font-size="4.5" fill="#626262" text-anchor="middle">R207</text>
<text x="968" y="490" font-size="4.5" fill="#626262" text-anchor="middle">0.0_0R_0201_1/20W_J</text>
<text x="897" y="490" font-size="4.5" fill="#626262" text-anchor="middle">C203</text>
<text x="867" y="495.5" font-size="4.2" fill="#626262" text-anchor="start">0.5F_100pF_0201_C0G_25V_J</text>
<text x="867" y="491.5" font-size="3.8" fill="#626262" text-anchor="start">MBF</text>
<text x="867" y="499.5" font-size="3.8" fill="#626262" text-anchor="start">4WR204</text>
<path d="M864.5,518.5 L971.5,518.5" fill="none" stroke="#5a5a5a" stroke-width="1"/>
<path d="M971,518.5 L972.25,516.3 L974.75,520.7 L977.25,516.3 L979.75,520.7 L982.25,516.3 L984.75,520.7 L986,518.5" fill="none" stroke="#5a5a5a" stroke-width="1"/>
<path d="M986.5,518.5 L1035.5,518.5" fill="none" stroke="#5a5a5a" stroke-width="1"/>
<circle cx="904" cy="518.5" r="1.4" fill="#222"/>
<path d="M904.5,518.5 L904.5,527.5" fill="none" stroke="#5a5a5a" stroke-width="1"/>
<path d="M899.5,527.5 L909.5,527.5" fill="none" stroke="#5a5a5a" stroke-width="1"/>
<path d="M899.5,531.5 L909.5,531.5" fill="none" stroke="#5a5a5a" stroke-width="1"/>
<path d="M904.5,531.5 L904.5,541.5" fill="none" stroke="#5a5a5a" stroke-width="1"/>
<path d="M899.5,541.5 L909.5,541.5" fill="none" stroke="#5a5a5a" stroke-width="1"/>
<path d="M901.5,543.5 L907.5,543.5" fill="none" stroke="#5a5a5a" stroke-width="1"/>
<path d="M902,543.5 L904,546 L906,543.5" fill="none" stroke="#5a5a5a" stroke-width="0.8"/>
<text x="900" y="512" font-size="4.5" fill="#626262" text-anchor="middle">C200</text>
<text x="905" y="516" font-size="4.5" fill="#626262" text-anchor="middle">0.5F_100pF_0201_C0G_25V_J</text>
<text x="978" y="513" font-size="4.5" fill="#626262" text-anchor="middle">R214</text>
<text x="976" y="525" font-size="4.5" fill="#626262" text-anchor="middle">0.0_0R_0201_1/20W_J</text>
<text x="868" y="516" font-size="3.5" fill="#626262" text-anchor="start">5</text>
<path d="M855.5,536.5 L855.5,558.5 L917.5,558.5" fill="none" stroke="#5a5a5a" stroke-width="1"/>
<path d="M917.5,558 L918.88,555.8 L921.62,560.2 L924.38,555.8 L927.12,560.2 L929.88,555.8 L932.62,560.2 L934,558" fill="none" stroke="#5a5a5a" stroke-width="1"/>
<path d="M934.5,558.5 L1035.5,558.5" fill="none" stroke="#5a5a5a" stroke-width="1"/>
<circle cx="895" cy="558" r="1.4" fill="#222"/>
<path d="M895.5,558.5 L895.5,562.5" fill="none" stroke="#5a5a5a" stroke-width="1"/>
<path d="M890.5,562.5 L900.5,562.5" fill="none" stroke="#5a5a5a" stroke-width="1"/>
<path d="M890.5,566.5 L900.5,566.5" fill="none" stroke="#5a5a5a" stroke-width="1"/>
<path d="M895.5,566.5 L895.5,575.5" fill="none" stroke="#5a5a5a" stroke-width="1"/>
<path d="M890.5,575.5 L900.5,575.5" fill="none" stroke="#5a5a5a" stroke-width="1"/>
<path d="M892.5,577.5 L898.5,577.5" fill="none" stroke="#5a5a5a" stroke-width="1"/>
<path d="M893,578.0 L895,580.5 L897,578.0" fill="none" stroke="#5a5a5a" stroke-width="0.8"/>
<text x="926" y="552" font-size="4.5" fill="#626262" text-anchor="middle">R213</text>
<text x="923" y="565" font-size="4.5" fill="#626262" text-anchor="middle">0.0_0R_0201_1/20W_J</text>
<text x="870" y="555" font-size="4.5" fill="#626262" text-anchor="middle">C202</text>
<text x="866" y="561" font-size="4.5" fill="#626262" text-anchor="middle">0.5_1uF_0201_X7R_25V_K</text>
<path d="M1039,481.0 L1036,483.5 L1039,486.0 M1041,481.0 L1038,483.5 L1041,486.0" fill="none" stroke="#5a5a5a" stroke-width="0.9"/>
<text x="1036" y="479.5" font-size="3.5" fill="#626262" text-anchor="start">(1)</text>
<text x="1042" y="485.0" font-size="4.2" fill="#626262" text-anchor="start">PAINT_VCTL1</text>
<path d="M1039,516.0 L1036,518.5 L1039,521.0 M1041,516.0 L1038,518.5 L1041,521.0" fill="none" stroke="#5a5a5a" stroke-width="0.9"/>
<text x="1036" y="514.5" font-size="3.5" fill="#626262" text-anchor="start">(1)</text>
<text x="1042" y="520.0" font-size="4.2" fill="#626262" text-anchor="start">PAINT_VCTL</text>
<path d="M1039,555.5 L1036,558 L1039,560.5 M1041,555.5 L1038,558 L1041,560.5" fill="none" stroke="#5a5a5a" stroke-width="0.9"/>
<text x="1036" y="554" font-size="3.5" fill="#626262" text-anchor="start">(1)</text>
<text x="1042" y="559.5" font-size="4.2" fill="#626262" text-anchor="start">VREG_L15_2P7</text>
<path d="M772.5,548.5 L794.5,548.5" fill="none" stroke="#5a5a5a" stroke-width="1"/>
<path d="M794.5,548.5 L795.83,546.3 L798.5,550.7 L801.17,546.3 L803.83,550.7 L806.5,546.3 L809.17,550.7 L810.5,548.5" fill="none" stroke="#5a5a5a" stroke-width="1"/>
<path d="M810.5,548.5 L842.5,548.5 L842.5,536.5" fill="none" stroke="#5a5a5a" stroke-width="1"/>
<path d="M772.5,548.5 L772.5,553.5" fill="none" stroke="#5a5a5a" stroke-width="1"/>
<path d="M767.5,553.5 L777.5,553.5" fill="none" stroke="#5a5a5a" stroke-width="1"/>
<path d="M769.5,555.5 L775.5,555.5" fill="none" stroke="#5a5a5a" stroke-width="1"/>
<path d="M770.5,555.5 L772.5,558 L774.5,555.5" fill="none" stroke="#5a5a5a" stroke-width="0.8"/>
<text x="800" y="542" font-size="4.5" fill="#626262" text-anchor="middle">R211</text>
<text x="815" y="549" font-size="4.5" fill="#626262" text-anchor="middle">0.0_0R_0201_1/20W_J</text>
<path d="M772.5,566.5 L794.5,566.5" fill="none" stroke="#5a5a5a" stroke-width="1"/>
<path d="M794.5,566.5 L795.83,564.3 L798.5,568.7 L801.17,564.3 L803.83,568.7 L806.5,564.3 L809.17,568.7 L810.5,566.5" fill="none" stroke="#5a5a5a" stroke-width="1"/>
<path d="M810.5,566.5 L846.5,566.5 L846.5,536.5" fill="none" stroke="#5a5a5a" stroke-width="1"/>
<path d="M768,560.5 L777,560.5 L772.5,564 Z" fill="none" stroke="#5a5a5a" stroke-width="0.9"/>
<path d="M772.5,560.5 L772.5,566.5" fill="none" stroke="#5a5a5a" stroke-width="1"/>
<text x="800" y="561" font-size="4.5" fill="#626262" text-anchor="middle">R212</text>
<text x="802" y="574" font-size="4.5" fill="#626262" text-anchor="middle">R0201_NC</text>
<text x="848" y="540" font-size="3" fill="#626262" text-anchor="start">4 3 2 1 8</text>
<text x="517.5" y="568" font-size="4.2" fill="#505050" text-anchor="middle">GND202</text>
<path d="M513.0,573 L517.5,579 L522.0,573" fill="none" stroke="#5a5a5a" stroke-width="1"/>
<path d="M513.5,573.5 L522.5,573.5" fill="none" stroke="#5a5a5a" stroke-width="1"/>
<path d="M517.5,573.5 L517.5,582.5" fill="none" stroke="#5a5a5a" stroke-width="1"/>
<path d="M513.5,582.5 L522.5,582.5" fill="none" stroke="#5a5a5a" stroke-width="1"/>
<path d="M513.5,586.5 L522.5,586.5" fill="none" stroke="#5a5a5a" stroke-width="1"/>
<path d="M517.5,586.5 L517.5,610.5" fill="none" stroke="#5a5a5a" stroke-width="1"/>
<path d="M513.5,610.5 L522.5,610.5" fill="none" stroke="#5a5a5a" stroke-width="1"/>
<path d="M515.5,613.5 L520.5,613.5" fill="none" stroke="#5a5a5a" stroke-width="1"/>
<path d="M517.5,615.5 L518.5,615.5" fill="none" stroke="#5a5a5a" stroke-width="1"/>
<text x="526.5" y="574" font-size="4" fill="#505050" text-anchor="start" transform="rotate(90 526.5 574)" font-weight="bold">ESWR01E7</text>
<text x="544" y="568" font-size="4.2" fill="#505050" text-anchor="middle">GND203</text>
<path d="M539.5,573 L544,579 L548.5,573" fill="none" stroke="#5a5a5a" stroke-width="1"/>
<path d="M539.5,573.5 L548.5,573.5" fill="none" stroke="#5a5a5a" stroke-width="1"/>
<path d="M544.5,573.5 L544.5,582.5" fill="none" stroke="#5a5a5a" stroke-width="1"/>
<path d="M539.5,582.5 L548.5,582.5" fill="none" stroke="#5a5a5a" stroke-width="1"/>
<path d="M539.5,586.5 L548.5,586.5" fill="none" stroke="#5a5a5a" stroke-width="1"/>
<path d="M544.5,586.5 L544.5,610.5" fill="none" stroke="#5a5a5a" stroke-width="1"/>
<path d="M539.5,610.5 L548.5,610.5" fill="none" stroke="#5a5a5a" stroke-width="1"/>
<path d="M541.5,613.5 L546.5,613.5" fill="none" stroke="#5a5a5a" stroke-width="1"/>
<path d="M543.5,615.5 L544.5,615.5" fill="none" stroke="#5a5a5a" stroke-width="1"/>
<text x="553" y="574" font-size="4" fill="#505050" text-anchor="start" transform="rotate(90 553 574)" font-weight="bold">ESWR01E7</text>
<text x="570.5" y="568" font-size="4.2" fill="#505050" text-anchor="middle">GND204</text>
<path d="M566.0,573 L570.5,579 L575.0,573" fill="none" stroke="#5a5a5a" stroke-width="1"/>
<path d="M566.5,573.5 L575.5,573.5" fill="none" stroke="#5a5a5a" stroke-width="1"/>
<path d="M570.5,573.5 L570.5,582.5" fill="none" stroke="#5a5a5a" stroke-width="1"/>
<path d="M566.5,582.5 L575.5,582.5" fill="none" stroke="#5a5a5a" stroke-width="1"/>
<path d="M566.5,586.5 L575.5,586.5" fill="none" stroke="#5a5a5a" stroke-width="1"/>
<path d="M570.5,586.5 L570.5,610.5" fill="none" stroke="#5a5a5a" stroke-width="1"/>
<path d="M566.5,610.5 L575.5,610.5" fill="none" stroke="#5a5a5a" stroke-width="1"/>
<path d="M568.5,613.5 L573.5,613.5" fill="none" stroke="#5a5a5a" stroke-width="1"/>
<path d="M570.5,615.5 L571.5,615.5" fill="none" stroke="#5a5a5a" stroke-width="1"/>
<text x="579.5" y="574" font-size="4" fill="#505050" text-anchor="start" transform="rotate(90 579.5 574)" font-weight="bold">ESWR01E7</text>
<text x="596.5" y="566" font-size="4.2" fill="#505050" text-anchor="middle">GND205</text>
<path d="M592.0,571 L596.5,577 L601.0,571" fill="none" stroke="#5a5a5a" stroke-width="1"/>
<path d="M592.5,571.5 L601.5,571.5" fill="none" stroke="#5a5a5a" stroke-width="1"/>
<path d="M596.5,571.5 L596.5,580.5" fill="none" stroke="#5a5a5a" stroke-width="1"/>
<path d="M592.5,580.5 L601.5,580.5" fill="none" stroke="#5a5a5a" stroke-width="1"/>
<path d="M592.5,584.5 L601.5,584.5" fill="none" stroke="#5a5a5a" stroke-width="1"/>
<path d="M596.5,584.5 L596.5,608.5" fill="none" stroke="#5a5a5a" stroke-width="1"/>
<path d="M592.5,608.5 L601.5,608.5" fill="none" stroke="#5a5a5a" stroke-width="1"/>
<path d="M594.5,611.5 L599.5,611.5" fill="none" stroke="#5a5a5a" stroke-width="1"/>
<path d="M596.5,613.5 L597.5,613.5" fill="none" stroke="#5a5a5a" stroke-width="1"/>
<text x="605.5" y="572" font-size="4" fill="#505050" text-anchor="start" transform="rotate(90 605.5 572)" font-weight="bold">ESWR01E7</text>
<path d="M587.5,163.5 L587.5,168.5" fill="none" stroke="#8a8a8a" stroke-width="1"/>
<path d="M587.5,826.5 L587.5,831.5" fill="none" stroke="#8a8a8a" stroke-width="1"/>
<path d="M763.5,163.5 L763.5,168.5" fill="none" stroke="#8a8a8a" stroke-width="1"/>
<path d="M763.5,826.5 L763.5,831.5" fill="none" stroke="#8a8a8a" stroke-width="1"/>
<path d="M938.5,163.5 L938.5,168.5" fill="none" stroke="#8a8a8a" stroke-width="1"/>
<path d="M938.5,826.5 L938.5,831.5" fill="none" stroke="#8a8a8a" stroke-width="1"/>
<path d="M1113.5,163.5 L1113.5,168.5" fill="none" stroke="#8a8a8a" stroke-width="1"/>
<path d="M1113.5,826.5 L1113.5,831.5" fill="none" stroke="#8a8a8a" stroke-width="1"/>
<text x="501" y="166.5" font-size="4" fill="#999" text-anchor="middle">·</text>
<text x="501" y="830" font-size="4" fill="#999" text-anchor="middle">·</text>
<text x="676" y="166.5" font-size="4" fill="#999" text-anchor="middle">·</text>
<text x="676" y="830" font-size="4" fill="#999" text-anchor="middle">·</text>
<text x="850" y="166.5" font-size="4" fill="#999" text-anchor="middle">·</text>
<text x="850" y="830" font-size="4" fill="#999" text-anchor="middle">·</text>
<text x="1026" y="166.5" font-size="4" fill="#999" text-anchor="middle">·</text>
<text x="1026" y="830" font-size="4" fill="#999" text-anchor="middle">·</text>
<text x="1200" y="166.5" font-size="4" fill="#999" text-anchor="middle">·</text>
<text x="1200" y="830" font-size="4" fill="#999" text-anchor="middle">·</text>
<path d="M408.5,331.5 L413.5,331.5" fill="none" stroke="#8a8a8a" stroke-width="1"/>
<path d="M1291.5,331.5 L1295.5,331.5" fill="none" stroke="#8a8a8a" stroke-width="1"/>
<path d="M408.5,497.5 L413.5,497.5" fill="none" stroke="#8a8a8a" stroke-width="1"/>
<path d="M1291.5,497.5 L1295.5,497.5" fill="none" stroke="#8a8a8a" stroke-width="1"/>
<path d="M408.5,662.5 L413.5,662.5" fill="none" stroke="#8a8a8a" stroke-width="1"/>
<path d="M1291.5,662.5 L1295.5,662.5" fill="none" stroke="#8a8a8a" stroke-width="1"/>
<text x="410" y="252" font-size="4" fill="#999" text-anchor="middle">·</text>
<text x="1293" y="252" font-size="4" fill="#999" text-anchor="middle">·</text>
<text x="410" y="416" font-size="4" fill="#999" text-anchor="middle">·</text>
<text x="1293" y="416" font-size="4" fill="#999" text-anchor="middle">·</text>
<text x="410" y="581" font-size="4" fill="#999" text-anchor="middle">·</text>
<text x="1293" y="581" font-size="4" fill="#999" text-anchor="middle">·</text>
<text x="410" y="746" font-size="4" fill="#999" text-anchor="middle">·</text>
<text x="1293" y="746" font-size="4" fill="#999" text-anchor="middle">·</text>
<rect x="1132.5" y="786.5" width="158" height="39" fill="none" stroke="#222" stroke-width="1.3"/>
<path d="M1132.5,794.5 L1290.5,794.5" fill="none" stroke="#222" stroke-width="1.3"/>
<path d="M1132.5,807.5 L1290.5,807.5" fill="none" stroke="#222" stroke-width="1.3"/>
<path d="M1132.5,821.5 L1290.5,821.5" fill="none" stroke="#222" stroke-width="1.3"/>
<path d="M1145.5,807.5 L1145.5,821.5" fill="none" stroke="#222" stroke-width="1"/>
<path d="M1276.5,807.5 L1276.5,821.5" fill="none" stroke="#222" stroke-width="1"/>
<path d="M1219.5,821.5 L1219.5,825.5" fill="none" stroke="#222" stroke-width="0.8"/>
<path d="M1241.5,821.5 L1241.5,825.5" fill="none" stroke="#222" stroke-width="0.8"/>
<path d="M1256.5,821.5 L1256.5,825.5" fill="none" stroke="#222" stroke-width="0.8"/>
<path d="M1270.5,821.5 L1270.5,825.5" fill="none" stroke="#222" stroke-width="0.8"/>
<text x="1133" y="798.5" font-size="3.8" fill="#111" text-anchor="start" font-weight="bold">Title</text>
<text x="1149" y="803" font-size="4" fill="#111" text-anchor="start" font-weight="bold">&lt;Title&gt;</text>
<text x="1133" y="811.5" font-size="3.8" fill="#111" text-anchor="start" font-weight="bold">Size</text>
<text x="1137" y="816.5" font-size="4" fill="#111" text-anchor="start" font-weight="bold">C</text>
<text x="1149" y="811" font-size="4" fill="#111" text-anchor="start" font-weight="bold">Document Number</text>
<text x="1149" y="815.5" font-size="4" fill="#111" text-anchor="start" font-weight="bold">&lt;Doc&gt;</text>
<text x="1278" y="811" font-size="3.8" fill="#111" text-anchor="start" font-weight="bold">Rev</text>
<text x="1281" y="816" font-size="4" fill="#111" text-anchor="start" font-weight="bold">&lt;RevCode&gt;</text>
<text x="1133" y="825" font-size="3.5" fill="#111" text-anchor="start" font-weight="bold">Date:</text>
<text x="1155" y="825" font-size="3.8" fill="#111" text-anchor="start" font-weight="bold">Thursday, December 28, 2017</text>
<text x="1219" y="825" font-size="3.5" fill="#111" text-anchor="start" font-weight="bold">Sheet</text>
<text x="1247" y="825" font-size="3.5" fill="#111" text-anchor="start" font-weight="bold">1</text>
<text x="1258" y="825" font-size="3.5" fill="#111" text-anchor="start" font-weight="bold">of</text>
</svg>
<div class="a" style="left:0;top:834px;width:1521px;height:3px;background:#eaf2f8"></div>
<div class="a" style="left:0;top:836px;width:1521px;height:20px;background:linear-gradient(#44637a,#45668a 30%,#46658b 60%,#3f6888 90%,#346a86)"></div>
<div class="a mono" style="left:0;top:844px;font-size:12px;letter-spacing:-1.2px;color:#000">Version:1.0.0.52</div>
<div class="a mono" style="left:1297px;top:843px;font-size:12px;letter-spacing:-1.2px;color:#fff">Current [X608_QL1661_SCHMATICS_KB_V5]</div>
<div id="frameB" class="a"></div>

</body></html>
